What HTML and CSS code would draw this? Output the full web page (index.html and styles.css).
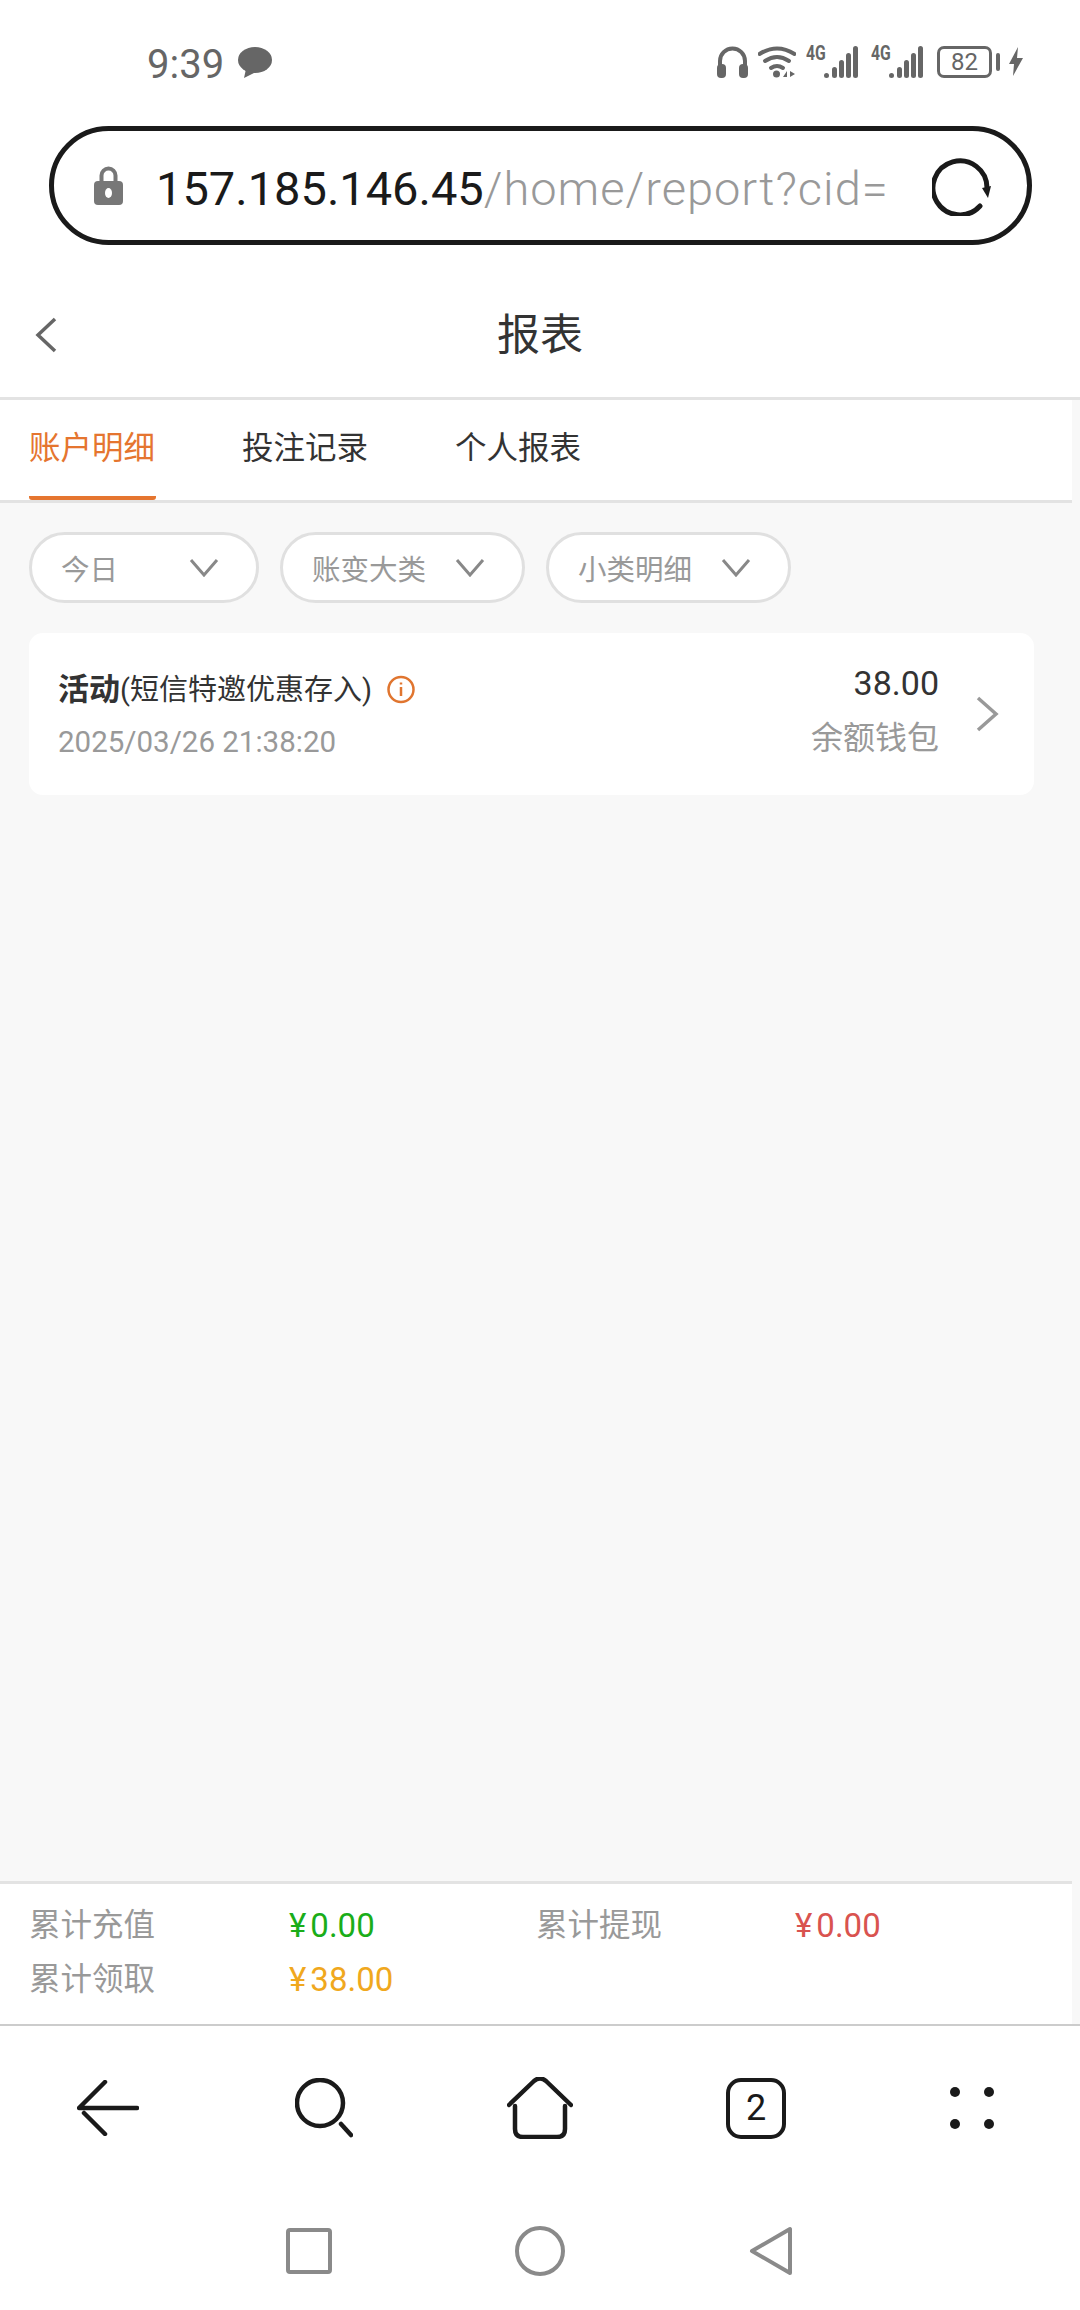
FILE: index.html

```html
<!DOCTYPE html>
<html lang="zh-CN">
  <head>
    <meta charset="utf-8">
    <title>报表</title>
    <link rel="stylesheet" href="styles.css">
  </head>
  <body>
    <div class="status">
      <span class="time">9:39</span>
      <svg class="bubble" width="34" height="31" viewBox="0 0 34 31"><ellipse cx="17" cy="13" rx="17" ry="13"/><path d="M8 22 L6 31 L18 25 Z"/></svg>
      <div class="status-icons">
        <svg width="31" height="32" viewBox="0 0 31 32"><path class="st" d="M3 24 V15 a12.5 12.5 0 0 1 25 0 V24"/><rect class="sf" x="0" y="18" width="9" height="14" rx="4"/><rect class="sf" x="22" y="18" width="9" height="14" rx="4"/></svg>
        <svg width="38" height="32" viewBox="0 0 38 32"><path class="st" d="M1.5 8 Q19 -3 36.500 8"/><path class="st" d="M7 15 Q19 7 31 15"/><path class="st" d="M13 22 Q19 18 25 22"/><circle class="sf" cx="18.500" cy="28" r="3.500"/><path class="sf" d="M25 31 L29 25 V31 Z M32 25 L37 28 L32 31 Z"/></svg>
        <div class="signal"><span class="net">4G</span><svg width="52" height="32" viewBox="0 0 52 32"><rect class="sf" x="18" y="27" width="5" height="5" rx="2.500"/><rect class="sf" x="26" y="21" width="5" height="11" rx="2.500"/><rect class="sf" x="33" y="14" width="5" height="18" rx="2.500"/><rect class="sf" x="40" y="7" width="5" height="25" rx="2.500"/><rect class="sf" x="47" y="0" width="5" height="32" rx="2.500"/></svg></div>
        <div class="signal signal-2"><span class="net">4G</span><svg width="52" height="32" viewBox="0 0 52 32"><rect class="sf" x="18" y="27" width="5" height="5" rx="2.500"/><rect class="sf" x="26" y="21" width="5" height="11" rx="2.500"/><rect class="sf" x="33" y="14" width="5" height="18" rx="2.500"/><rect class="sf" x="40" y="7" width="5" height="25" rx="2.500"/><rect class="sf" x="47" y="0" width="5" height="32" rx="2.500"/></svg></div>
        <div class="battery"><span class="battery-body">82</span><span class="battery-nub"></span></div>
        <svg width="14" height="29" viewBox="0 0 14 29"><path class="sf" d="M9 0 L0 17 H5 L4 29 L14 11 H8 Z"/></svg>
      </div>
    </div>

    <div class="urlbar">
      <svg class="lock" width="29" height="39" viewBox="0 0 29 39"><path class="lock-arc" d="M7.500 17 V9.500 a7 7 0 0 1 14 0 V17"/><rect x="0" y="15" width="29" height="24" rx="4"/><ellipse cx="14.500" cy="27" rx="3.500" ry="5" fill="#fff"/></svg>
      <div class="url"><span class="url-host">157.185.146.45</span><span class="url-path">/home/report?cid=</span></div>
      <svg class="reload" width="60" height="60" viewBox="0 0 60 60"><path class="reload-arc" d="M48 50 A27 27 0 1 1 55 32"/><path d="M50 32 L59 30 L56 42 Z"/></svg>
    </div>

    <div class="header">
      <svg class="back" width="22" height="36" viewBox="0 0 22 36"><path d="M20 2 L3 18 L20 34"/></svg>
      <h1 class="title">报表</h1>
    </div>

    <div class="tabs">
      <a class="tab tab-active">账户明细</a>
      <a class="tab">投注记录</a>
      <a class="tab">个人报表</a>
    </div>

    <div class="main">
      <div class="filters">
        <div class="pill pill-wide"><span>今日</span><svg class="pill-arrow" width="30" height="19" viewBox="0 0 30 19"><path d="M2 2 L15 17 L28 2"/></svg></div>
        <div class="pill"><span>账变大类</span><svg class="pill-arrow" width="30" height="19" viewBox="0 0 30 19"><path d="M2 2 L15 17 L28 2"/></svg></div>
        <div class="pill"><span>小类明细</span><svg class="pill-arrow" width="30" height="19" viewBox="0 0 30 19"><path d="M2 2 L15 17 L28 2"/></svg></div>
      </div>

      <div class="card">
        <div class="card-left">
          <div class="card-title"><b>活动</b><span>(短信特邀优惠存入)</span>
            <svg class="info" width="28" height="29" viewBox="0 0 28 29"><circle cx="14" cy="14.500" r="12.500"/><path d="M14 12 V21"/><path d="M14 7.500 V9.500"/></svg>
          </div>
          <div class="card-date">2025/03/26 21:38:20</div>
        </div>
        <div class="card-right">
          <div class="card-amount">38.00</div>
          <div class="card-wallet">余额钱包</div>
        </div>
        <svg class="card-arrow" width="24" height="36" viewBox="0 0 24 36"><path d="M3 2 L21 18 L3 34"/></svg>
      </div>
    </div>

    <div class="summary-wrap">
      <div class="summary">
        <span class="sum-label">累计充值</span><span class="sum-value sum-green">¥<i>0.00</i></span><span class="sum-label">累计提现</span><span class="sum-value sum-red">¥<i>0.00</i></span>
        <span class="sum-label">累计领取</span><span class="sum-value sum-yellow">¥<i>38.00</i></span>
      </div>
    </div>

    <div class="toolbar">
      <div class="tool"><svg width="62" height="56" viewBox="0 0 62 56"><path d="M28 2 L2 28 H60"/><path d="M7 33 L28 54"/></svg></div>
      <div class="tool"><svg width="58" height="60" viewBox="0 0 58 60"><circle cx="25" cy="25" r="23"/><path d="M46 46 L56 57"/></svg></div>
      <div class="tool"><svg width="66" height="62" viewBox="0 0 66 62"><path d="M2 28 L27 4 Q33 -1 39 4 L64 28"/><path d="M8 29 V52 Q8 60 16 60 H50 Q58 60 58 52 V29"/></svg></div>
      <div class="tool"><div class="tabcount">2</div></div>
      <div class="tool"><div class="dots"><i></i><i></i><i></i><i></i></div></div>
    </div>

    <div class="sysnav">
      <svg width="46" height="46" viewBox="0 0 46 46"><rect x="2" y="2" width="42" height="42" rx="2"/></svg>
      <svg width="50" height="50" viewBox="0 0 50 50"><circle cx="25" cy="25" r="23"/></svg>
      <svg width="44" height="50" viewBox="0 0 44 50"><path d="M41 3 V47 L3 25 Z"/></svg>
    </div>
  </body>
</html>
```

FILE: styles.css

```css
* {box-sizing: border-box;}
html, body {margin: 0; padding: 0;}
body {
  width: 1080px; height: 2310px; overflow: hidden; background: #fff; color: #333;
  font-family: Roboto, "Noto Sans CJK SC", sans-serif;
  display: flex; flex-direction: column;
}

/* status bar */
.status {height: 126px; flex: none; display: flex; align-items: center; padding: 0 57px 3px 147px; color: #666;}
.time {font-size: 40px; line-height: 1; margin-top: 6px;}
.bubble {margin: 2px 0 0 14px; fill: #666;}
.status-icons {margin-left: auto; display: flex; align-items: center; gap: 10px;}
.st {fill: none; stroke: #666; stroke-width: 4; stroke-linecap: round;}
.sf {fill: #666;}
.signal {position: relative; width: 52px; height: 32px;}
.signal svg {display: block;}
.signal-2 {margin-left: 3px;}
.net {position: absolute; left: 0; top: 0; font-size: 21px; line-height: 15px; font-weight: 700; color: #666; transform: scaleX(.75); transform-origin: left top;}
.battery {display: flex; align-items: center; gap: 4px; margin: 0 -1px 0 4px;}
.battery-body {width: 55px; height: 32px; border: 3px solid #666; border-radius: 7px; font-size: 24px; line-height: 26px; text-align: center;}
.battery-nub {width: 4px; height: 18px; border-radius: 2px; background: #666;}

/* address bar */
.urlbar {
  flex: none; height: 119px; margin: 0 48px 0 49px; padding: 0 35px 0 40px;
  border: 5px solid #1a1a1a; border-radius: 60px; display: flex; align-items: center;
}
.lock {flex: none; fill: #777;}
.lock-arc {fill: none; stroke: #777; stroke-width: 4;}
.url {flex: 1; margin: 5px 0 0 33px; font-size: 47px; white-space: nowrap; overflow: hidden;}
.url-host {color: #1a1a1a;}
.url-path {color: #999; font-weight: 300; letter-spacing: 1px;}
.reload {flex: none; fill: #1a1a1a;}
.reload-arc {fill: none; stroke: #1a1a1a; stroke-width: 5; stroke-linecap: round;}

/* page header */
.header {
  flex: none; height: 124px; margin-top: 28px; box-sizing: content-box;
  display: flex; align-items: center; justify-content: center; position: relative;
}
.back {position: absolute; left: 35px; top: 44px; fill: none; stroke: #666; stroke-width: 3.500;}
.title {margin: 0; font-size: 43px; font-weight: 400; color: #333; line-height: 1;}

/* tabs */
.tabs {
  flex: none; width: 100%; height: 106px; border-top: 3px solid #e3e3e3; padding-left: 29px;
  display: flex; gap: 86px; position: relative;
  background: linear-gradient(#fff, #fff) no-repeat 0 0 / 1072px 100px, #f8f8f8;
}
.tabs::after {content: ""; position: absolute; left: 0; top: 100px; width: 1072px; height: 3px; background: #e3e3e3;}
.tab {height: 100px; width: 127px; font-size: 31.500px; line-height: 98px; white-space: nowrap; color: #333;}
.tab-active {color: #e5752f; border-bottom: 4px solid #e5752f; border-radius: 0 0 3px 3px;}

/* filters and list */
.main {flex: 1; background: #f8f8f8; padding: 29px 46px 0 29px;}
.filters {display: flex; gap: 21px;}
.pill {
  width: 245px; height: 71px; padding: 0 37px 0 29px; background: #fff;
  border: 3px solid #e0e0e0; border-radius: 36px; color: #999; font-size: 28.500px;
  display: flex; align-items: center; justify-content: space-between;
}
.pill-wide {width: 230px;}
.pill-arrow {fill: none; stroke: #888; stroke-width: 3;}

.card {
  margin-top: 30px; height: 162px; padding: 0 35px 0 29px; background: #fff; border-radius: 14px;
  display: flex; align-items: center;
}
.card-left {flex: 1;}
.card-title {display: flex; align-items: center; font-size: 29px; line-height: 40px; color: #333;}
.card-title b {font-size: 31px; font-weight: 700;}
.info {margin-left: 15px; fill: none; stroke: #e0752f; stroke-width: 2.500;}
.card-date {margin-top: 15px; font-size: 29.500px; line-height: 34px; color: #999;}
.card-right {text-align: right; margin-top: -8px;}
.card-amount {font-size: 34px; line-height: 40px; color: #333;}
.card-wallet {margin-top: 15px; font-size: 32px; line-height: 40px; color: #999;}
.card-arrow {margin-left: 36px; fill: none; stroke: #999; stroke-width: 3.500;}

/* totals */
.summary-wrap {flex: none; height: 145px; background: #f8f8f8; border-bottom: 2px solid #ccc;}
.summary {
  width: 1072px; height: 143px; background: #fff; border-top: 3px solid #e3e3e3; padding: 22px 0 0 29px;
  display: grid; grid-template-columns: 260px 247px 259px 1fr; grid-auto-rows: 54px; font-size: 31.500px; line-height: 40px;
}
.summary i {font-style: normal; margin-left: 4px;}
.sum-label {color: #999;}
.sum-value {font-size: 33px;}
.sum-green {color: #1aad19;}
.sum-red {color: #d9534f;}
.sum-yellow {color: #f0a81e;}

/* browser toolbar */
.toolbar {flex: none; height: 164px; display: flex;}
.tool {flex: 1; display: flex; align-items: center; justify-content: center;}
.tool svg {fill: none; stroke: #1a1a1a; stroke-width: 4.500; stroke-linecap: round; stroke-linejoin: round;}
.tabcount {
  width: 60px; height: 61px; border: 4.500px solid #1a1a1a; border-radius: 15px;
  font-size: 36px; line-height: 52px; text-align: center; color: #1a1a1a;
}
.dots {display: grid; grid-template-columns: 10px 10px; column-gap: 24px; row-gap: 22px;}
.dots i {width: 10px; height: 10px; border-radius: 50%; background: #1a1a1a;}

/* system nav */
.sysnav {flex: none; height: 120px; display: grid; grid-template-columns: repeat(3, 231px); justify-content: center; justify-items: center; align-items: center; padding-top: 2px;}
.sysnav svg {fill: none; stroke: #8a8a8a; stroke-width: 4; stroke-linejoin: round;}
```
